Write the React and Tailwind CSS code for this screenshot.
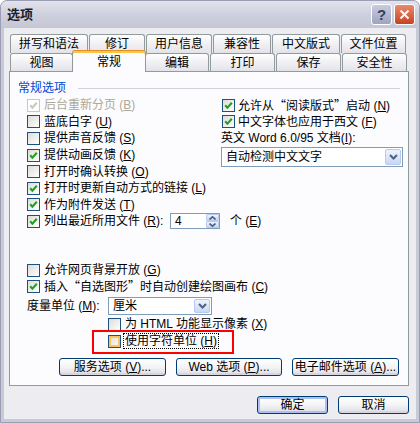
import React from "react";

const FONT = "font-['Liberation_Sans','Noto_Sans_CJK_SC',sans-serif]";

function Mn({ k }) {
  return (
    <span>
      (<u>{k}</u>)
    </span>
  );
}

function Q({ children }) {
  return <span className="font-['Noto_Sans_CJK_SC',sans-serif]">{children}</span>;
}

function Check() {
  return (
    <svg width="9" height="9" viewBox="0 0 9 9">
      <path d="M1.2 4.2 L3.4 6.6 L7.8 1.8" stroke="currentColor" strokeWidth="2.1" fill="none" />
    </svg>
  );
}

function Box({ checked, disabled, hover }) {
  const base = disabled
    ? "border-[#cac8bb] bg-white text-[#cac8bb]"
    : "border-[#1c5180] bg-linear-to-br from-[#dcdcd7] to-white text-[#21a121]";
  const hv = hover ? "shadow-[inset_0_0_0_2px_#f9c35e]" : "";
  return (
    <span className={`flex h-[13px] w-[13px] shrink-0 items-center justify-center border ${base} ${hv}`}>
      {checked && <Check />}
    </span>
  );
}

function Row({ checked, disabled, hover, children, gap = "gap-[4px]", extra = "" }) {
  return (
    <div className={`flex h-[16.6px] items-center ${gap} ${extra}`}>
      <Box checked={checked} disabled={disabled} hover={hover} />
      <span className={`shrink-0 whitespace-nowrap leading-[14px] ${disabled ? "text-[#aca899]" : ""}`}>{children}</span>
    </div>
  );
}

function Chevron() {
  return (
    <svg width="9" height="6" viewBox="0 0 9 6">
      <path d="M1 1 L4.5 4.5 L8 1" stroke="#4d6185" strokeWidth="2" fill="none" />
    </svg>
  );
}

function Select({ text, w, h }) {
  return (
    <div className={`flex shrink-0 ${w} ${h} items-center border border-[#7f9db9] bg-white pl-[4px]`}>
      <span className="flex-1 whitespace-nowrap leading-[14px]">{text}</span>
      <span className="mr-px flex h-[calc(100%-2px)] w-[16px] items-center justify-center rounded-[2px] border border-[#b9c9ee] bg-linear-to-b from-[#eef3fd] to-[#c9d7f5]">
        <Chevron />
      </span>
    </div>
  );
}

function Btn({ children, w, def }) {
  return (
    <div
      className={`flex ${w} h-[18px] shrink-0 items-center justify-center rounded-[3px] border border-[#003c74] bg-linear-to-b from-white via-[#f4f4f6] to-[#dcdce4] leading-[14px] ${
        def ? "shadow-[inset_0_0_0_2px_#a9c0f0]" : "shadow-[inset_0_-2px_0_#d6d6e0]"
      }`}
    >
      <span className="whitespace-nowrap">{children}</span>
    </div>
  );
}

function Tab({ w, children }) {
  return (
    <div
      className={`flex ${w} mr-px h-full shrink-0 items-center justify-center rounded-t-[3px] border border-b-0 border-[#919b9c] bg-linear-to-b from-white to-[#e2e2e9] leading-[14px]`}
    >
      {children}
    </div>
  );
}

function Spin() {
  return (
    <div className="flex h-[16px] w-[50px] shrink-0 border border-[#7f9db9] bg-white">
      <span className="flex-1 pl-[4px] leading-[14px]">4</span>
      <div className="flex w-[13px] flex-col">
        <span className="flex h-[7px] items-center justify-center rounded-[1px] border border-[#b9c9ee] bg-linear-to-b from-[#eef3fd] to-[#c9d7f5]">
          <svg width="7" height="4" viewBox="0 0 7 4">
            <path d="M0.5 3.5 L3.5 0.8 L6.5 3.5" stroke="#4d6185" strokeWidth="1.6" fill="none" />
          </svg>
        </span>
        <span className="flex h-[7px] items-center justify-center rounded-[1px] border border-[#b9c9ee] bg-linear-to-b from-[#eef3fd] to-[#c9d7f5]">
          <svg width="7" height="4" viewBox="0 0 7 4">
            <path d="M0.5 0.5 L3.5 3.2 L6.5 0.5" stroke="#4d6185" strokeWidth="1.6" fill="none" />
          </svg>
        </span>
      </div>
    </div>
  );
}

export default function App() {
  return (
    <div className={`${FONT} flex h-[423px] w-[420px] flex-col overflow-hidden rounded-t-[7px] border border-[#9a9db3] bg-[#c9cad8] text-[12px] text-black`}>
      {/* title bar */}
      <div className="flex h-[27px] shrink-0 items-center bg-linear-to-b from-[#e2e3ec] via-[#cfd0dd] to-[#c6c7d6] pl-[6px] pr-[4px]">
        <span className="flex-1 text-[13px] font-bold leading-[16px] text-[#1c1c28]">选项</span>
        <div className="flex gap-[2px]">
          <span className="flex h-[21px] w-[21px] items-center justify-center rounded-[3px] border border-white bg-linear-to-b from-[#c9cce0] to-[#9ea3c2] text-[15px] font-bold leading-none text-[#3a3d55]">
            ?
          </span>
          <span className="flex h-[21px] w-[21px] items-center justify-center rounded-[3px] border border-white bg-linear-to-b from-[#e88a6c] to-[#c8401f]">
            <svg width="11" height="11" viewBox="0 0 11 11">
              <path d="M1.5 1.5 L9.5 9.5 M9.5 1.5 L1.5 9.5" stroke="white" strokeWidth="2" />
            </svg>
          </span>
        </div>
      </div>

      {/* body */}
      <div className="mx-[3px] mb-[3px] flex flex-1 flex-col bg-[#ededf1] pl-[5px] pt-[6px]">
        {/* tabs */}
        <div className="flex flex-col pl-[1px]">
          <div className="flex h-[19px]">
            <Tab w="w-[78px]">拼写和语法</Tab>
            <Tab w="w-[56px]">修订</Tab>
            <Tab w="w-[66px]">用户信息</Tab>
            <Tab w="w-[58px]">兼容性</Tab>
            <Tab w="w-[68px]">中文版式</Tab>
            <Tab w="w-[65px]">文件位置</Tab>
          </div>
          <div className="flex h-[18px] items-end">
            <Tab w="w-[63px]">视图</Tab>
            <div className="relative z-10 -mx-[2px] -mb-px mr-[-1px] flex h-[22px] w-[74px] shrink-0 items-center justify-center rounded-t-[3px] border border-b-0 border-[#919b9c] border-t-[#e68b2c] bg-[#fcfcfe] leading-[14px] shadow-[inset_0_2px_0_#ffc83c]">
              常规
            </div>
            <Tab w="w-[64px]">编辑</Tab>
            <Tab w="w-[65px]">打印</Tab>
            <Tab w="w-[65px]">保存</Tab>
            <Tab w="w-[65px]">安全性</Tab>
          </div>
        </div>

        {/* panel */}
        <div className="relative flex h-[315px] w-[400px] flex-col border border-[#919b9c] bg-[#fcfcfe]">
          <div className="mt-[9px] flex h-[14px] items-center pl-[8px] pr-[8px]">
            <span className="leading-[14px] text-[#0046d5]">常规选项</span>
            <span className="ml-[12px] h-px flex-1 bg-[#d0d0d8]" />
          </div>

          <div className="mt-[2px] flex pl-[17px]">
            <div className="flex w-[194px] shrink-0 flex-col">
              <Row checked disabled>
                后台重新分页 <Mn k="B" />
              </Row>
              <Row>
                蓝底白字 <Mn k="U" />
              </Row>
              <Row>
                提供声音反馈 <Mn k="S" />
              </Row>
              <Row checked>
                提供动画反馈 <Mn k="K" />
              </Row>
              <Row>
                打开时确认转换 <Mn k="O" />
              </Row>
              <Row checked>
                打开时更新自动方式的链接 <Mn k="L" />
              </Row>
              <Row checked>
                作为附件发送 <Mn k="T" />
              </Row>
              <div className="flex h-[16.6px] items-center gap-[4px]">
                <Box checked />
                <span className="w-[122px] shrink-0 whitespace-nowrap leading-[14px]">
                  列出最近所用文件 <Mn k="R" />:
                </span>
                <Spin />
                <span className="ml-[6px] shrink-0 whitespace-nowrap leading-[14px]">
                  个 <Mn k="E" />
                </span>
              </div>
            </div>
            <div className="flex w-[182px] shrink-0 flex-col">
              <Row checked gap="gap-[3px]" extra="pl-px">
                允许从<Q>“</Q>阅读版式<Q>”</Q>启动 <Mn k="N" />
              </Row>
              <Row checked gap="gap-[3px]" extra="pl-px">
                中文字体也应用于西文 <Mn k="F" />
              </Row>
              <div className="flex h-[16.6px] items-center whitespace-nowrap leading-[14px]">
                英文 Word 6.0/95 文档 <Mn k="I" />:
              </div>
              <Select text="自动检测中文文字" w="w-[182px]" h="h-[20px]" />
            </div>
          </div>

          <div className="mt-[32px] flex flex-col pl-[17px]">
            <Row>
              允许网页背景开放 <Mn k="G" />
            </Row>
            <Row checked>
              插入<Q>“</Q>自选图形<Q>”</Q>时自动创建绘图画布 <Mn k="C" />
            </Row>
            <div className="mt-[2px] flex h-[18px] items-center">
              <span className="w-[81px] shrink-0 whitespace-nowrap leading-[14px]">
                度量单位 <Mn k="M" />:
              </span>
              <Select text="厘米" w="w-[104px]" h="h-[18px]" />
            </div>
            <div className="mt-[1px] flex h-[17px] items-center gap-[4px] pl-[81px]">
              <Box />
              <span className="whitespace-nowrap leading-[14px]">
                为 HTML 功能显示像素 <Mn k="X" />
              </span>
            </div>
            <div className="flex h-[17px] items-center gap-[2px] pl-[81px]">
              <Box hover />
              <span className="whitespace-nowrap border border-dotted border-black px-[1px] leading-[14px]">
                使用字符单位 <Mn k="H" />
              </span>
            </div>
            <div className="mt-[8px] flex gap-[10px] pl-[32px]">
              <Btn w="w-[107px]">
                服务选项 <Mn k="V" />...
              </Btn>
              <Btn w="w-[106px]">
                Web 选项 <Mn k="P" />...
              </Btn>
              <Btn w="w-[107px]">
                电子邮件选项 <Mn k="A" />...
              </Btn>
            </div>
          </div>

          <div className="absolute left-[82px] top-[258px] h-[24px] w-[142px] border-2 border-[#ff0000]" />
        </div>

        <div className="mt-[10px] flex w-[400px] justify-end gap-[10px]">
          <Btn w="w-[71px]" def>
            确定
          </Btn>
          <Btn w="w-[71px]">取消</Btn>
        </div>
      </div>
    </div>
  );
}
